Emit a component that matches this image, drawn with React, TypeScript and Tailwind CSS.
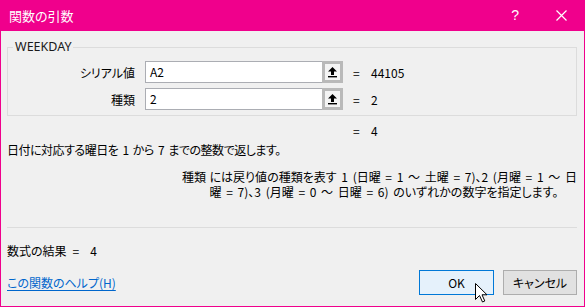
import React from 'react';

const jp = "font-['Meiryo_UI','Noto_Sans_CJK_JP',sans-serif] [font-feature-settings:'palt']";

function RefButton() {
  return (
    <div className="w-[21px] h-[22px] border-[3px] border-[#b9b9b9] bg-[#f4f4f4] flex items-center justify-center">
      <svg width="11" height="12" viewBox="0 0 11 12">
        <path d="M5.5 1 L10 5.5 L7 5.5 L7 9 L4 9 L4 5.5 L1 5.5 Z" fill="#000" />
        <rect x="1" y="10" width="9" height="1.4" fill="#000" />
      </svg>
    </div>
  );
}

function ArgRow({ label, value, result }: { label: string; value: string; result: string }) {
  return (
    <div className="flex items-center h-[22px]">
      <div className="w-[128px] text-right pr-[1px]">{label}</div>
      <div className="ml-[9px] w-[198px] h-[22px] flex border border-[#abadb3] bg-white">
        <div className="flex-1 pl-[4px] leading-[20px]">{value}</div>
        <div className="-mr-[1px] -my-[1px]">
          <RefButton />
        </div>
      </div>
      <span className="ml-[10px] w-[18px]">=</span>
      <span>{result}</span>
    </div>
  );
}

export default function App() {
  return (
    <div className={`relative w-[585px] h-[307px] bg-[#f0008c] flex flex-col px-[1px] pb-[1px] text-[12px] text-black ${jp}`}>
      {/* title bar */}
      <div className="h-[31px] flex items-center text-white">
        <span className="ml-[8px] text-[13px]">関数の引数</span>
        <span className="ml-auto mr-[37px] text-[14px] font-['Liberation_Sans',sans-serif]">?</span>
        <svg className="mr-[17px]" width="11" height="11" viewBox="0 0 11 11">
          <path d="M0.5 0.5 L10.5 10.5 M10.5 0.5 L0.5 10.5" stroke="#fff" strokeWidth="1.2" />
        </svg>
      </div>

      <div className="flex-1 bg-[#f0f0f0] pl-[6px] pr-[7px] flex flex-col leading-[15px]">
        <fieldset className="mt-[9px] border border-[#dcdcdc] px-0 pt-[7px] pb-[5px] flex flex-col gap-[5px]">
          <legend className="ml-[5px] px-[2px] leading-[14px] text-[12.5px] text-[#1a1a1a] font-['Noto_Sans',sans-serif]">WEEKDAY</legend>
          <ArgRow label="シリアル値" value="A2" result="44105" />
          <ArgRow label="種類" value="2" result="2" />
        </fieldset>

        <div className="mt-[7px] flex">
          <span className="ml-[346px] w-[18px]">=</span>
          <span>4</span>
        </div>

        <div className="mt-[4px] tracking-[-0.5px] [word-spacing:2px]">日付に対応する曜日を 1 から 7 までの整数で返します。</div>

        <div className="mt-[12px] flex whitespace-nowrap">
          <span className="ml-[175px] w-[32px]">種類</span>
          <span className="leading-[15px] [word-spacing:2px]">
            には戻り値の種類を表す 1 (日曜 = 1 ～ 土曜 = 7)、2 (月曜 = 1 ～ 日<br />
            曜 = 7)、3 (月曜 = 0 ～ 日曜 = 6) のいずれかの数字を指定します。
          </span>
        </div>

        <div className="mt-[28px] h-px bg-[#dcdcdc]" />

        <div className="mt-[15px] flex">
          <span>数式の結果</span>
          <span className="ml-[6px]">=</span>
          <span className="ml-[11px]">4</span>
        </div>

        <div className="mt-[12px] flex items-center">
          <a className="text-[#0066cc] underline underline-offset-2">この関数のヘルプ(H)</a>
          <button className="ml-auto w-[75px] h-[25px] border border-[#0078d7] bg-[#e5f1fb]">OK</button>
          <button className="ml-[9px] w-[74px] h-[25px] border border-[#adadad] bg-[#e1e1e1]">キャンセル</button>
        </div>
      </div>

      {/* mouse pointer */}
      <svg className="absolute left-[475px] top-[283px]" width="13" height="20" viewBox="0 0 13 20">
        <path d="M0.5 0.5 L0.5 16.5 L4.5 12.5 L7.5 19 L9.8 18 L7 11.8 L12 11.8 Z" fill="#fff" stroke="#000" strokeWidth="1" strokeLinejoin="round" />
      </svg>
    </div>
  );
}
